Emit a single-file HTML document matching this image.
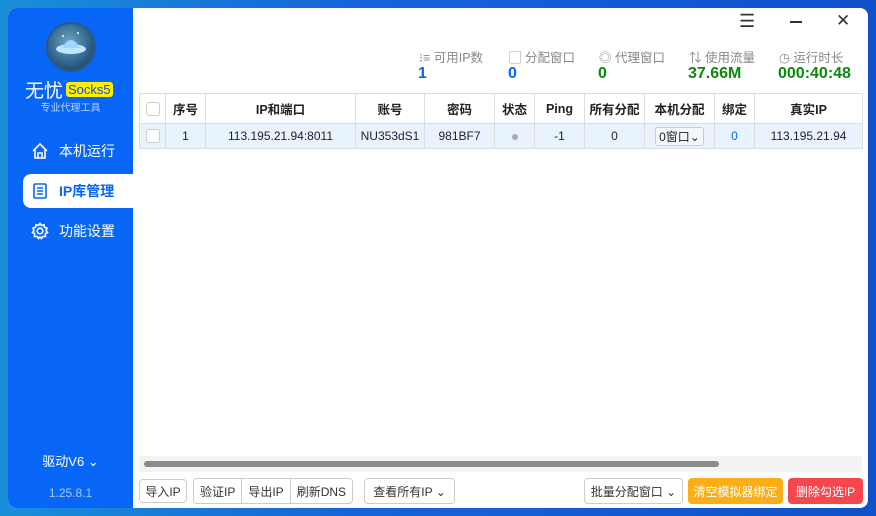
<!DOCTYPE html>
<html><head><meta charset="utf-8"><style>
*{box-sizing:border-box;margin:0;padding:0}
body{width:876px;height:516px;overflow:hidden;background:linear-gradient(90deg,#1a8fd8,#1565d8 40%,#1050c8);font-family:"Liberation Sans","Noto Sans CJK SC",sans-serif;position:relative}
.win{position:absolute;left:8px;top:8px;width:860px;height:500px;background:#fff;border-radius:8px;overflow:hidden}
.side{position:absolute;left:0;top:0;width:125px;height:500px;background:#0866f7;color:#fff;border-radius:8px 0 0 8px}
.logo{position:absolute;left:40px;top:16px;width:46px;height:46px;border-radius:50%;background:radial-gradient(circle at 45% 40%,#6fa7c8,#2d5f86 60%,#16324d);box-shadow:0 0 0 2px #2a5a84}
.brand{position:absolute;left:17px;top:68px;font-size:19px;white-space:nowrap}
.brand span{background:#fff000;color:#1050d0;font-size:13px;padding:0 2px;border-radius:3px;position:relative;top:-3px;margin-left:3px}
.sub{position:absolute;left:0;width:125px;top:91px;text-align:center;font-size:10px;color:#bcd3ff}
.nav{position:absolute;left:15px;width:110px;height:34px;font-size:14px;display:flex;align-items:center;padding-left:8px}
.nav svg{margin-right:10px}
.nav.act{background:#fff;color:#0866f7;border-radius:8px 0 0 8px;font-weight:bold}
.drv{position:absolute;top:443px;left:0;width:125px;text-align:center;font-size:13px}
.ver{position:absolute;top:478px;left:0;width:125px;text-align:center;font-size:12px;color:#a9c6ff}
.stat{position:absolute;top:39px;font-size:12.5px;color:#888}
.val{position:absolute;top:57px;font-size:16px;font-weight:bold}
table{position:absolute;left:131px;top:85px;border-collapse:collapse;font-size:12px;color:#222}
td{border:1px solid #ddd;text-align:center;height:30px}
tr.r td{height:25px;background:#e8f3fd}
th{border:1px solid #ddd;font-weight:bold;height:30px;font-size:12.5px}
.cb{display:inline-block;width:14px;height:14px;border:1px solid #ccc;border-radius:3px;background:#fff;vertical-align:middle}
.btn{position:absolute;top:471px;height:24px;border:1px solid #ccc;border-radius:4px;font-size:12px;display:flex;align-items:center;justify-content:center;color:#333;background:#fff}
.grp{position:absolute;top:470px;height:26px;border:1px solid #ccc;border-radius:4px;display:flex}
.grp div{font-size:12px;display:flex;align-items:center;padding:0 6px;border-right:1px solid #ccc;color:#333}
.grp div:last-child{border-right:none}
</style></head><body>
<div class="win">
 <div class="side">
  <div class="logo"><svg width="46" height="46" viewBox="0 0 46 46"><ellipse cx="23" cy="25" rx="15" ry="5" fill="#bfe6ff"/><path d="M14 24 Q23 8 32 24Z" fill="#9fd6ff"/><circle cx="15" cy="12" r="1" fill="#fff"/><circle cx="30" cy="9" r="1" fill="#fff"/></svg></div>
  <div class="brand">无忧<span>Socks5</span></div>
  <div class="sub">专业代理工具</div>
  <div class="nav" style="top:126px"><svg width="18" height="18" viewBox="0 0 18 18" fill="none" stroke="#fff" stroke-width="1.6"><path d="M2 9 L9 2 L16 9 M4 7 V16 H14 V7 M7 16 V11 H11 V16"/></svg>本机运行</div>
  <div class="nav act" style="top:166px"><svg width="18" height="18" viewBox="0 0 18 18" fill="none" stroke="#0866f7" stroke-width="1.6"><rect x="3" y="2" width="12" height="14" rx="1"/><path d="M6 6H12M6 9H12M6 12H12"/></svg>IP库管理</div>
  <div class="nav" style="top:206px"><svg width="18" height="18" viewBox="0 0 18 18" fill="none" stroke="#fff" stroke-width="1.6"><circle cx="9" cy="9" r="2.8"/><path d="M9 1.5 L10.5 3.5 L13 2.8 L13.5 5.3 L16 6 L15 8.5 L16.5 10.5 L14.3 11.8 L14.5 14.5 L11.8 14.5 L10.5 16.5 L9 15 L7.5 16.5 L6.2 14.5 L3.5 14.5 L3.7 11.8 L1.5 10.5 L3 8.5 L2 6 L4.5 5.3 L5 2.8 L7.5 3.5Z"/></svg>功能设置</div>
  <div class="drv">驱动V6 ⌄</div>
  <div class="ver">1.25.8.1</div>
 </div>
 <div style="position:absolute;left:731px;top:3px;font-size:18px;color:#333">☰</div>
 <div style="position:absolute;left:782px;top:13px;width:12px;height:1.5px;background:#333"></div>
 <div style="position:absolute;left:828px;top:3px;font-size:17px;color:#333">✕</div>
 <div class="stat" style="left:411px">⁝≡ 可用IP数</div><div class="val" style="left:410px;color:#0866f7">1</div>
 <div class="stat" style="left:501px">▢ 分配窗口</div><div class="val" style="left:500px;color:#0866f7">0</div>
 <div class="stat" style="left:591px">◎ 代理窗口</div><div class="val" style="left:590px;color:#0a8a0a">0</div>
 <div class="stat" style="left:681px">⇅ 使用流量</div><div class="val" style="left:680px;color:#0a8a0a">37.66M</div>
 <div class="stat" style="left:771px">◷ 运行时长</div><div class="val" style="left:770px;color:#0a8a0a">000:40:48</div>
 <table>
  <tr><th style="width:26px"><span class="cb"></span></th><th style="width:40px">序号</th><th style="width:150px">IP和端口</th><th style="width:69px">账号</th><th style="width:70px">密码</th><th style="width:40px">状态</th><th style="width:50px">Ping</th><th style="width:60px">所有分配</th><th style="width:70px">本机分配</th><th style="width:40px">绑定</th><th style="width:108px">真实IP</th></tr>
  <tr class="r"><td><span class="cb"></span></td><td>1</td><td>113.195.21.94:8011</td><td>NU353dS1</td><td>981BF7</td><td><span style="display:inline-block;width:6px;height:6px;border-radius:50%;background:#aaa"></span></td><td>-1</td><td>0</td><td><span style="display:inline-block;border:1px solid #ccc;border-radius:3px;padding:0 3px;background:#f4f8fc">0窗口⌄</span></td><td style="color:#0866f7">0</td><td>113.195.21.94</td></tr>
 </table>
 <div style="position:absolute;left:131px;top:448px;width:723px;height:16px;background:#f3f3f3"><div style="position:absolute;left:5px;top:5px;width:575px;height:6px;border-radius:3px;background:#8a8a8a"></div></div>
 <div class="btn" style="left:131px;width:48px">导入IP</div>
 <div class="grp" style="left:185px"><div>验证IP</div><div>导出IP</div><div>刷新DNS</div></div>
 <div class="btn" style="left:356px;width:91px;top:470px;height:26px">查看所有IP ⌄</div>
 <div class="btn" style="left:576px;width:99px;top:470px;height:26px">批量分配窗口 ⌄</div>
 <div class="btn" style="left:680px;width:95px;top:470px;height:26px;background:#fbae17;border-color:#fbae17;color:#fff">清空模拟器绑定</div>
 <div class="btn" style="left:780px;width:75px;top:470px;height:26px;background:#f5474d;border-color:#f5474d;color:#fff">删除勾选IP</div>
</div>
</body></html>
